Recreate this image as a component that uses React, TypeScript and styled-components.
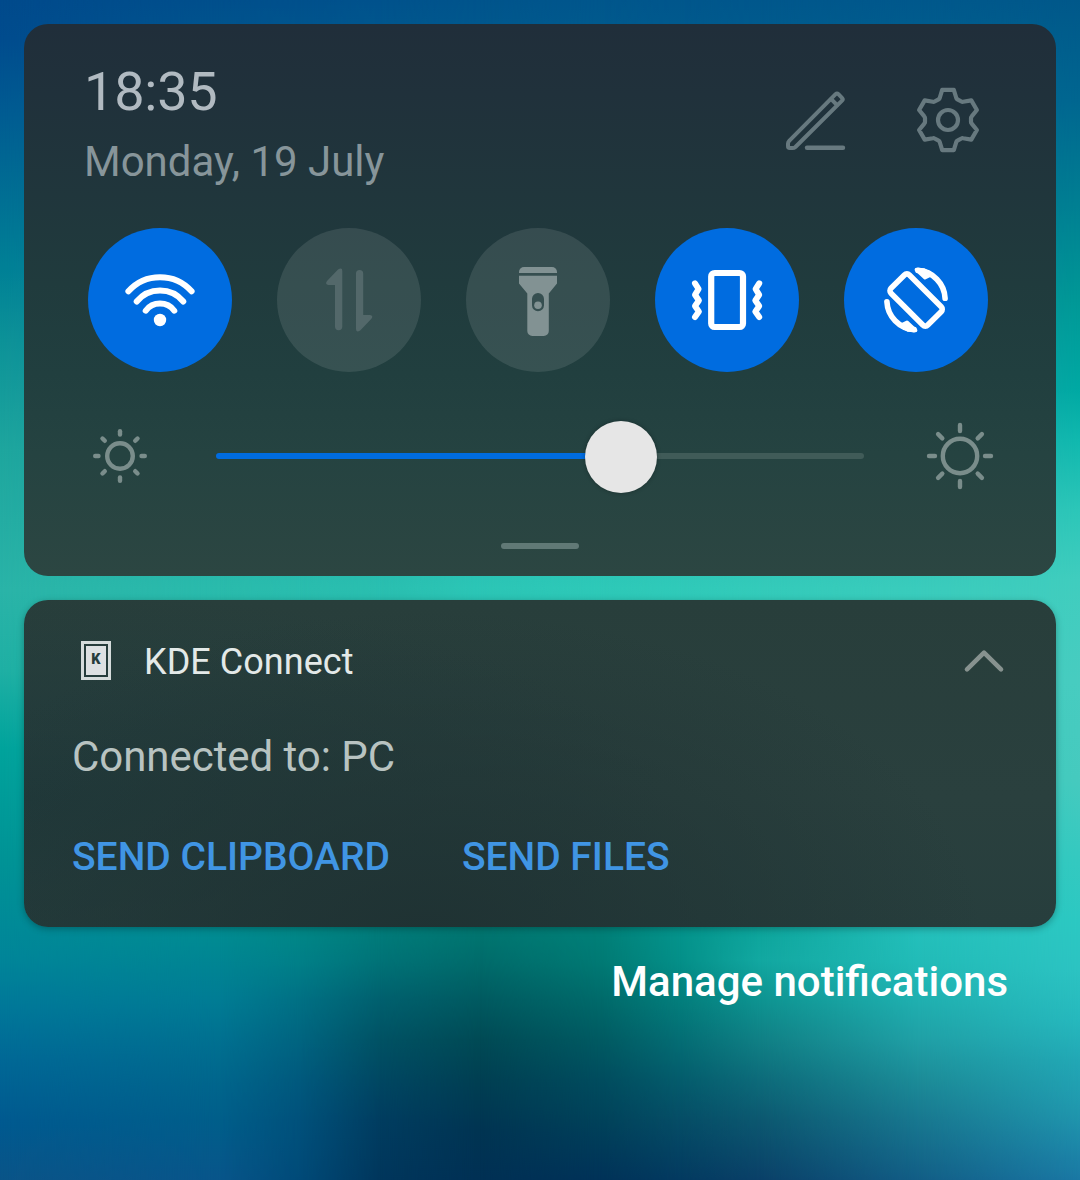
import React from "react";
import styled, { createGlobalStyle } from "styled-components";

const GlobalStyle = createGlobalStyle`
  html, body { margin: 0; padding: 0; }
  body { font-family: Roboto, "Noto Sans", sans-serif; overflow: hidden; }
  *, *::before, *::after { box-sizing: border-box; }
`;

/* Wallpaper: vertical colour ramps, each cross-faded into the next one. */
type Ramp = { x: number; stops: [string, number][] };

const ramps: Ramp[] = [
  { x: 0, stops: [["#004a8c", 0], ["#004c8e", 40], ["#005b92", 110], ["#007094", 200], ["#008096", 265], ["#0d9298", 340], ["#1ea69e", 450], ["#2ab4a8", 590], ["#1fb0a4", 670], ["#00a39c", 750], ["#009396", 860], ["#008599", 960], ["#007799", 1010], ["#006896", 1060], ["#005a90", 1120], ["#0a5488", 1180]] },
  { x: 220, stops: [["#004f8c", 0], ["#007094", 200], ["#2abbac", 588], ["#00928f", 900], ["#008a92", 940], ["#007c94", 1000], ["#006f90", 1045], ["#00658c", 1085], ["#005e8a", 1120], ["#08558a", 1180]] },
  { x: 300, stops: [["#00508c", 0], ["#007094", 200], ["#2abdae", 588], ["#008786", 930], ["#008088", 960], ["#007084", 1000], ["#006480", 1040], ["#00597d", 1080], ["#00517b", 1120], ["#004a78", 1180]] },
  { x: 380, stops: [["#00528c", 0], ["#007094", 200], ["#2abfb0", 588], ["#007c7a", 930], ["#007377", 960], ["#00606e", 1000], ["#005264", 1040], ["#004762", 1080], ["#003d60", 1120], ["#00365c", 1180]] },
  { x: 480, stops: [["#00548c", 0], ["#007094", 200], ["#2cc6b6", 588], ["#007670", 930], ["#006c6b", 960], ["#005a60", 1000], ["#004a55", 1040], ["#003f52", 1080], ["#003452", 1130], ["#003054", 1180]] },
  { x: 600, stops: [["#00568c", 0], ["#007094", 200], ["#2ec9b8", 588], ["#008078", 930], ["#007a74", 960], ["#006a6a", 1000], ["#005a62", 1040], ["#004c5e", 1080], ["#00425a", 1120], ["#003258", 1180]] },
  { x: 680, stops: [["#00568c", 0], ["#007094", 200], ["#30cab9", 588], ["#04948c", 930], ["#049089", 960], ["#037e7c", 1000], ["#046d74", 1040], ["#045c6c", 1080], ["#054d66", 1120], ["#033a60", 1180]] },
  { x: 760, stops: [["#00578c", 0], ["#007094", 200], ["#34cbba", 588], ["#0da59c", 930], ["#12a8a1", 960], ["#0e9491", 1000], ["#108085", 1040], ["#0d6b7a", 1080], ["#0c5870", 1120], ["#0a4068", 1180]] },
  { x: 920, stops: [["#00588c", 0], ["#007494", 200], ["#3accbc", 588], ["#24c0bb", 930], ["#22bcb8", 960], ["#20b0b0", 1000], ["#20a0a6", 1040], ["#1c8c98", 1080], ["#187890", 1120], ["#125e86", 1180]] },
  { x: 1080, stops: [["#00588a", 0], ["#006690", 100], ["#007e92", 200], ["#009896", 300], ["#00a9a3", 390], ["#10b8ae", 440], ["#2cc6b8", 510], ["#40cdbe", 580], ["#48ccc0", 680], ["#46cabe", 780], ["#34c9c0", 860], ["#2cc8c2", 920], ["#2cc3c2", 970], ["#26b8bd", 1020], ["#22a8b5", 1060], ["#2098ae", 1110], ["#1a78a4", 1180]] },
];

const Screen = styled.main`
  display: grid;
  width: 1080px;
  height: 1180px;
  overflow: hidden;
`;

const WallpaperRamp = styled.div<{ $ramp: Ramp; $from: number }>`
  grid-area: 1 / 1;
  background: linear-gradient(to bottom, ${(p) => p.$ramp.stops.map(([c, y]) => `${c} ${y}px`).join(", ")});
  ${(p) =>
    p.$ramp.x > 0 &&
    `mask-image: linear-gradient(to right, transparent ${p.$from}px, #000 ${p.$ramp.x}px);`}
`;

const Shade = styled.div`
  grid-area: 1 / 1;
  z-index: 1;
  display: flex;
  flex-direction: column;
  gap: 24px;
  padding: 24px;
`;

const Card = styled.section`
  border-radius: 24px;
  flex: none;
`;

const QuickSettings = styled(Card)`
  height: 552px;
  padding: 36px 60px 0;
  background: linear-gradient(to bottom, #202e3a 0, #20313b 70px, #20363c 170px, #203b3d 260px, #213f3f 350px, #254341 430px, #2c4642 552px);
`;

const Header = styled.header`
  display: flex;
  justify-content: space-between;
  height: 168px;
`;

const Clock = styled.div`
  color: #b1bac1;
  font-size: 54px;
  letter-spacing: -0.2px;
  line-height: 64px;
`;

const DateLine = styled.div`
  margin-top: 13px;
  color: #87959a;
  font-size: 42px;
  line-height: 50px;
`;

const HeaderActions = styled.div`
  display: flex;
  gap: 60px;
  padding: 24px 12px 0 0;
`;

const IconButton = styled.button`
  display: block;
  width: 72px;
  height: 72px;
  padding: 0;
  border: 0;
  background: none;
  color: #67797f;
`;

const Toggles = styled.div`
  display: flex;
  gap: 45px;
  padding-left: 4px;
`;

const Toggle = styled.button<{ $on?: boolean; $color?: string }>`
  flex: none;
  width: 144px;
  height: 144px;
  padding: 0;
  border: 0;
  border-radius: 50%;
  background: ${(p) => (p.$on ? "#006ce0" : "rgba(255, 255, 255, 0.1)")};
  color: ${(p) => p.$color ?? "#fff"};
`;

const Svg = styled.svg`
  display: block;
  fill: none;
  stroke: currentColor;
  stroke-linecap: round;
  stroke-linejoin: round;
`;

const BrightnessRow = styled.div`
  display: flex;
  align-items: center;
  justify-content: space-between;
  height: 72px;
  margin-top: 48px;
  color: #7a8d8b;
`;

const Track = styled.div`
  display: flex;
  align-items: center;
  width: 648px;
  height: 72px;
`;

const TrackFill = styled.div`
  width: 373px;
  height: 6px;
  border-radius: 3px 0 0 3px;
  background: #006ce0;
`;

const TrackRest = styled.div`
  flex: 1;
  height: 6px;
  margin-left: -4px;
  border-radius: 0 3px 3px 0;
  background: #405b58;
`;

const Thumb = styled.div`
  z-index: 1;
  flex: none;
  width: 72px;
  height: 72px;
  margin: 1px 0 0 -4px;
  border-radius: 50%;
  background: #e6e6e6;
  box-shadow: 0 0 4px rgba(0, 0, 0, 0.3);
`;

const Handle = styled.div`
  width: 78px;
  height: 6px;
  margin: 51px auto 0;
  border-radius: 3px;
  background: #617976;
`;

const Notification = styled(Card)`
  height: 327px;
  padding: 40px 48px 0;
  background: radial-gradient(ellipse 560px 330px at 400px 340px, #1f3233 0, rgba(31, 50, 51, 0) 100%),
    radial-gradient(ellipse 640px 210px at 0 200px, #20393a 0, rgba(32, 57, 58, 0) 100%),
    linear-gradient(to bottom, #283e3b 0, #2a403e 60%, #273e3d 100%);
  box-shadow: 0 2px 7px rgba(0, 0, 0, 0.28);
`;

const TitleRow = styled.div`
  display: flex;
  align-items: center;
  height: 44px;
  padding-left: 9px;
`;

const AppIcon = styled.div`
  width: 30px;
  height: 39px;
  margin: -4px 33px 0 0;
  padding: 2px;
  border: 3px solid #d5dcdb;
`;

const AppIconFace = styled.div`
  display: flex;
  align-items: center;
  justify-content: center;
  height: 100%;
  padding-top: 1px;
  background: #dde1e2;
  color: #263c3b;
  font-size: 14.5px;
  font-weight: 900;
  line-height: 1;
`;

const AppName = styled.div`
  flex: 1;
  color: #e3e9e8;
  font-size: 36px;
  letter-spacing: 0.05px;
  line-height: 44px;
`;

const Chevron = styled(Svg)`
  width: 48px;
  height: 44px;
  color: #87928f;
`;

const Message = styled.div`
  margin-top: 48px;
  color: #b8c3c1;
  font-size: 42px;
  letter-spacing: -0.05px;
  line-height: 50px;
`;

const Actions = styled.div`
  display: flex;
  gap: 72px;
  margin-top: 52px;
`;

const ActionLink = styled.button`
  padding: 0;
  border: 0;
  background: none;
  color: #4095e4;
  font: 500 39px/46px Roboto, sans-serif;
  white-space: nowrap;
`;

const Manage = styled.button`
  align-self: flex-end;
  margin: 6px 48px 0 0;
  padding: 0;
  border: 0;
  background: none;
  color: #fff;
  font: 500 42px/50px Roboto, sans-serif;
`;

const PenIcon = () => (
  <Svg width="72" height="72" viewBox="0 0 72 72" strokeWidth="4">
    <path d="M55.6 10.2 Q57 8.8 58.4 10.2 L62 13.8 Q63.4 15.2 62 16.6 L15.4 63 Q14.2 64.1 12.5 64.1 H9.8 Q8 64.1 8 62.3 V59.7 Q8 58 9.2 56.8 Z" />
    <path d="M51.2 15.2 L57 21" />
    <path d="M27 63.8 H63" strokeWidth="4.4" />
  </Svg>
);

const GearIcon = () => (
  <Svg width="72" height="72" viewBox="0 0 72 72" strokeWidth="4.2">
    <path d="M30.2 5.9 H41.8 L44.3 14 Q44.6 14.9 45.4 15.3 L49.4 17.5 Q50.2 18 51.1 17.8 L59.3 16.4 L64.9 26 L59.7 32.4 Q59 33.1 59 34 V38 Q59 38.9 59.7 39.6 L64.9 46 L59.3 55.6 L51.1 54.2 Q50.2 54 49.4 54.5 L45.4 56.7 Q44.6 57.1 44.3 58 L41.8 66.1 H30.2 L27.7 58 Q27.4 57.1 26.6 56.7 L22.6 54.5 Q21.8 54 20.9 54.2 L12.7 55.6 L7.1 46 L12.3 39.6 Q13 38.9 13 38 V34 Q13 33.1 12.3 32.4 L7.1 26 L12.7 16.4 L20.9 17.8 Q21.8 18 22.6 17.5 L26.6 15.3 Q27.4 14.9 27.7 14 Z" />
    <circle cx="36" cy="36" r="10" strokeWidth="4.2" />
  </Svg>
);

const WifiIcon = () => (
  <Svg width="144" height="144" viewBox="0 0 144 144" strokeWidth="6">
    <path d="M40.4 63.3 A42.5 42.5 0 0 1 103.6 63.3" />
    <path d="M48.7 73.5 A30.2 30.2 0 0 1 95.3 73.5" />
    <path d="M57.7 82.7 A17.9 17.9 0 0 1 86.3 82.7" />
    <circle cx="72" cy="92" r="6.2" fill="currentColor" stroke="none" />
  </Svg>
);

const DataIcon = () => (
  <Svg width="144" height="144" viewBox="0 0 144 144">
    <path
      d="M61 41.6 Q65.3 38.9 65.3 43 V98.5 A3.6 3.6 0 0 1 58 98.5 V57 H51.5 Q47.6 56.4 50 53 Z M79 45.6 A3.6 3.6 0 0 1 86.2 45.6 V87 H93 Q96.8 87.5 94.4 90.8 L83.2 102.4 Q79 105.1 79 101 Z"
      fill="currentColor"
      stroke="none"
    />
  </Svg>
);

const TorchIcon = () => (
  <Svg width="144" height="144" viewBox="0 0 144 144">
    <g fill="currentColor" stroke="none">
      <path d="M53 45 V44 A5 5 0 0 1 58 39 H86 A5 5 0 0 1 91 44 V45 Z" />
      <path
        fillRule="evenodd"
        d="M53 47.8 H91 V55.5 L82.8 65.5 V103 A5 5 0 0 1 77.8 108 H66.3 A5 5 0 0 1 61.3 103 V65.5 L53 55.5 Z M66 71 V77.3 A6 6 0 0 0 78 77.3 V71 A6 6 0 0 0 66 71 Z"
      />
      <circle cx="72" cy="77.3" r="3.8" />
    </g>
  </Svg>
);

const VibrateIcon = () => (
  <Svg width="144" height="144" viewBox="0 0 144 144" strokeWidth="6">
    <rect x="56.2" y="45" width="31.8" height="54" rx="3.5" strokeWidth="6.2" />
    <path d="M40 55.3 L43.6 61 L40 66.8 L43.9 72.5 L40 78 L43.9 83.6 L40 89" />
    <path d="M104.2 55.3 L100.6 61 L104.2 66.8 L100.3 72.5 L104.2 78 L100.3 83.6 L104.2 89" />
  </Svg>
);

const RotateIcon = () => (
  <Svg width="144" height="144" viewBox="0 0 144 144" strokeWidth="5.6">
    <rect x="59.1" y="46" width="26" height="52" rx="3.5" transform="rotate(-45 72.1 72)" />
    {[0, 180].map((angle) => (
      <g key={angle} transform={`rotate(${angle} 72 72)`}>
        <path d="M74 42.4 A29.3 29.3 0 0 1 101.1 70.3" />
        <path d="M72.4 41.6 L81 49.6 L87.5 46.5 L80 42 Z" fill="currentColor" strokeWidth="3.6" />
      </g>
    ))}
  </Svg>
);

const SunIcon = ({ radius, from, to }: { radius: number; from: number; to: number }) => (
  <Svg width="72" height="72" viewBox="0 0 72 72" strokeWidth="4.4">
    <circle cx="36" cy="36" r={radius} />
    {[0, 45, 90, 135, 180, 225, 270, 315].map((angle) => (
      <path key={angle} d={`M36 ${36 - from} V${36 - to}`} transform={`rotate(${angle} 36 36)`} />
    ))}
  </Svg>
);

export default function App() {
  return (
    <>
      <GlobalStyle />
      <Screen>
        {ramps.map((ramp, i) => (
          <WallpaperRamp key={ramp.x} $ramp={ramp} $from={i > 0 ? ramps[i - 1].x : 0} />
        ))}
        <Shade>
          <QuickSettings>
            <Header>
              <div>
                <Clock>18:35</Clock>
                <DateLine>Monday, 19 July</DateLine>
              </div>
              <HeaderActions>
                <IconButton aria-label="Edit"><PenIcon /></IconButton>
                <IconButton aria-label="Settings"><GearIcon /></IconButton>
              </HeaderActions>
            </Header>
            <Toggles>
              <Toggle $on aria-label="Wi-Fi"><WifiIcon /></Toggle>
              <Toggle $color="#53686a" aria-label="Mobile data"><DataIcon /></Toggle>
              <Toggle $color="#829293" aria-label="Torch"><TorchIcon /></Toggle>
              <Toggle $on aria-label="Vibrate"><VibrateIcon /></Toggle>
              <Toggle $on aria-label="Auto-rotate"><RotateIcon /></Toggle>
            </Toggles>
            <BrightnessRow>
              <SunIcon radius={12.8} from={21.5} to={24.8} />
              <Track>
                <TrackFill />
                <Thumb />
                <TrackRest />
              </Track>
              <SunIcon radius={17.2} from={25} to={31} />
            </BrightnessRow>
            <Handle />
          </QuickSettings>
          <Notification>
            <TitleRow>
              <AppIcon><AppIconFace>K</AppIconFace></AppIcon>
              <AppName>KDE Connect</AppName>
              <Chevron viewBox="0 0 48 44" strokeWidth="4.6">
                <path d="M7 29.3 L24 12.7 L41 29.3" />
              </Chevron>
            </TitleRow>
            <Message>Connected to: PC</Message>
            <Actions>
              <ActionLink>SEND CLIPBOARD</ActionLink>
              <ActionLink>SEND FILES</ActionLink>
            </Actions>
          </Notification>
          <Manage>Manage notifications</Manage>
        </Shade>
      </Screen>
    </>
  );
}
